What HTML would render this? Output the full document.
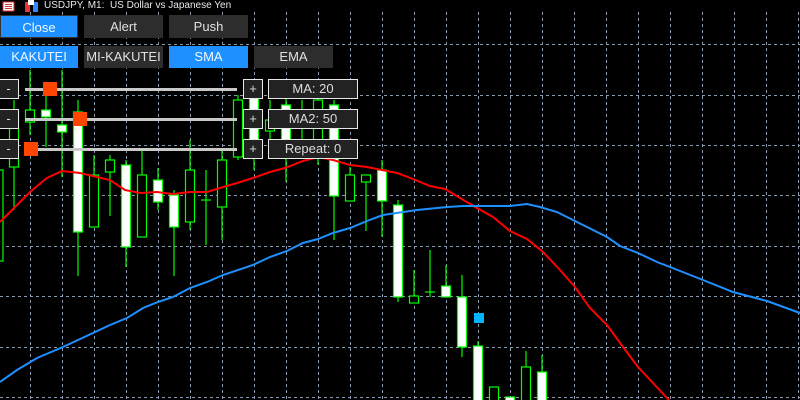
<!DOCTYPE html>
<html><head><meta charset="utf-8"><style>
body{margin:0;width:800px;height:400px;background:#000;overflow:hidden;position:relative;font-family:"Liberation Sans",sans-serif}
svg{position:absolute;left:0;top:0}
.b{position:absolute;height:23px;line-height:23px;text-align:center;color:#e0e0e0;font-size:13px;background:#2d2d2d;box-sizing:border-box}
.bl{background:#1e90ff;color:#f0f8ff}
.s{position:absolute;background:#222;border:1.5px solid #e8e8e8;box-sizing:border-box;color:#ddd;text-align:center;font-size:13px;height:20px;line-height:17px}
.hd{position:absolute;left:44px;top:0;font-size:10px;color:#e8e8e8;line-height:12px}
</style></head><body>
<svg width="800" height="400">
<g stroke="#8a9bb0" stroke-width="1" stroke-dasharray="3,3">
<line x1="0" y1="44.5" x2="800" y2="44.5"/><line x1="0" y1="95.5" x2="800" y2="95.5"/><line x1="0" y1="145.5" x2="800" y2="145.5"/><line x1="0" y1="195.5" x2="800" y2="195.5"/><line x1="0" y1="246.5" x2="800" y2="246.5"/><line x1="0" y1="296.5" x2="800" y2="296.5"/><line x1="0" y1="347.5" x2="800" y2="347.5"/><line x1="0" y1="397.5" x2="800" y2="397.5"/>
<line x1="30.5" y1="12" x2="30.5" y2="400"/><line x1="62.5" y1="12" x2="62.5" y2="400"/><line x1="94.5" y1="12" x2="94.5" y2="400"/><line x1="126.5" y1="12" x2="126.5" y2="400"/><line x1="158.5" y1="12" x2="158.5" y2="400"/><line x1="190.5" y1="12" x2="190.5" y2="400"/><line x1="222.5" y1="12" x2="222.5" y2="400"/><line x1="254.5" y1="12" x2="254.5" y2="400"/><line x1="286.5" y1="12" x2="286.5" y2="400"/><line x1="318.5" y1="12" x2="318.5" y2="400"/><line x1="350.5" y1="12" x2="350.5" y2="400"/><line x1="382.5" y1="12" x2="382.5" y2="400"/><line x1="414.5" y1="12" x2="414.5" y2="400"/><line x1="446.5" y1="12" x2="446.5" y2="400"/><line x1="478.5" y1="12" x2="478.5" y2="400"/><line x1="510.5" y1="12" x2="510.5" y2="400"/><line x1="542.5" y1="12" x2="542.5" y2="400"/><line x1="574.5" y1="12" x2="574.5" y2="400"/><line x1="606.5" y1="12" x2="606.5" y2="400"/><line x1="638.5" y1="12" x2="638.5" y2="400"/><line x1="670.5" y1="12" x2="670.5" y2="400"/><line x1="702.5" y1="12" x2="702.5" y2="400"/><line x1="734.5" y1="12" x2="734.5" y2="400"/><line x1="766.5" y1="12" x2="766.5" y2="400"/><line x1="798.5" y1="12" x2="798.5" y2="400"/>
</g>
<g stroke="#00ff00" stroke-width="1.2">
<line x1="14" y1="100" x2="14" y2="210"/><line x1="30" y1="70" x2="30" y2="135"/><line x1="46" y1="92" x2="46" y2="147"/><line x1="62" y1="70" x2="62" y2="177"/><line x1="78" y1="100" x2="78" y2="276"/><line x1="94" y1="155" x2="94" y2="227"/><line x1="110" y1="155" x2="110" y2="216"/><line x1="126" y1="160" x2="126" y2="267"/><line x1="142" y1="151" x2="142" y2="237"/><line x1="158" y1="168" x2="158" y2="210"/><line x1="174" y1="190" x2="174" y2="276"/><line x1="190" y1="140" x2="190" y2="230"/><line x1="206" y1="170" x2="206" y2="245"/><line x1="222" y1="151" x2="222" y2="240"/><line x1="238" y1="95" x2="238" y2="160"/><line x1="254" y1="90" x2="254" y2="170"/><line x1="270" y1="100" x2="270" y2="140"/><line x1="286" y1="95" x2="286" y2="182"/><line x1="302" y1="100" x2="302" y2="140"/><line x1="318" y1="95" x2="318" y2="165"/><line x1="334" y1="100" x2="334" y2="240"/><line x1="350" y1="167" x2="350" y2="201"/><line x1="366" y1="175" x2="366" y2="231"/><line x1="382" y1="160" x2="382" y2="237"/><line x1="398" y1="200" x2="398" y2="302"/><line x1="414" y1="270" x2="414" y2="303"/><line x1="430" y1="250" x2="430" y2="297"/><line x1="446" y1="265" x2="446" y2="297"/><line x1="462" y1="275" x2="462" y2="357"/><line x1="478" y1="341" x2="478" y2="400"/><line x1="526" y1="351" x2="526" y2="400"/><line x1="542" y1="355" x2="542" y2="400"/>
<line x1="425" y1="292" x2="435" y2="292"/><line x1="201" y1="200" x2="211" y2="200"/>
</g>
<g stroke="#00ff00" stroke-width="1.2">
<rect x="-2" y="170" width="5" height="91" fill="#000"/>
<rect x="9.5" y="110" width="9" height="57" fill="#000"/>
<rect x="25.5" y="110" width="9" height="12" fill="#000"/>
<rect x="41.5" y="110" width="9" height="7" fill="#fff"/>
<rect x="57.5" y="125" width="9" height="7" fill="#fff"/>
<rect x="73.5" y="112" width="9" height="120" fill="#fff"/>
<rect x="89.5" y="175" width="9" height="52" fill="#000"/>
<rect x="105.5" y="160" width="9" height="12" fill="#000"/>
<rect x="121.5" y="165" width="9" height="82" fill="#fff"/>
<rect x="137.5" y="175" width="9" height="62" fill="#000"/>
<rect x="153.5" y="180" width="9" height="22" fill="#fff"/>
<rect x="169.5" y="195" width="9" height="32" fill="#fff"/>
<rect x="185.5" y="170" width="9" height="52" fill="#000"/>
<rect x="217.5" y="160" width="9" height="47" fill="#000"/>
<rect x="233.5" y="100" width="9" height="57" fill="#000"/>
<rect x="249.5" y="95" width="9" height="60" fill="#fff"/>
<rect x="265.5" y="120" width="9" height="11" fill="#000"/>
<rect x="281.5" y="105" width="9" height="53" fill="#fff"/>
<rect x="313.5" y="100" width="9" height="40" fill="#000"/>
<rect x="329.5" y="105" width="9" height="91" fill="#fff"/>
<rect x="345.5" y="175" width="9" height="26" fill="#000"/>
<rect x="361.5" y="175" width="9" height="7" fill="#000"/>
<rect x="377.5" y="170" width="9" height="31" fill="#fff"/>
<rect x="393.5" y="205" width="9" height="92" fill="#fff"/>
<rect x="409.5" y="296" width="9" height="7" fill="#000"/>
<rect x="441.5" y="286" width="9" height="11" fill="#fff"/>
<rect x="457.5" y="297" width="9" height="50" fill="#fff"/>
<rect x="473.5" y="346" width="9" height="60" fill="#fff"/>
<rect x="489.5" y="387" width="9" height="20" fill="#000"/>
<rect x="505.5" y="397" width="9" height="10" fill="#fff"/>
<rect x="521.5" y="367" width="9" height="40" fill="#000"/>
<rect x="537.5" y="372" width="9" height="40" fill="#fff"/>
</g>
<rect x="474" y="313" width="10" height="10" fill="#00b4ff"/>
<polyline fill="none" stroke="#ff0000" stroke-width="2" points="0,222 13,209 30,192 47,178 62,171 80,173 97,177 110,180 125,190 140,193 157,192 173,194 190,192 207,192 220,188 237,183 253,178 270,172 285,168 303,161 318,157 333,160 350,165 367,167 397,173 413,179 430,186 445,189 460,198 477,208 493,217 510,231 527,239 543,252 560,270 575,287 590,308 607,325 623,347 638,367 653,383 667,398 669,400"/>
<polyline fill="none" stroke="#1e90ff" stroke-width="2" points="0,382 17,370 37,358 63,347 93,333 110,325 127,318 143,308 158,302 173,297 190,288 207,282 223,275 253,265 270,257 287,251 303,243 318,239 333,233 350,228 367,221 383,215 417,210 447,207 463,206 510,206 527,204 540,207 557,212 577,222 607,237 620,246 638,253 657,262 670,267 703,280 733,292 767,301 800,313"/>
<g fill="#c8c8c8"><rect x="25" y="88" width="212" height="3"/><rect x="25" y="118" width="212" height="3"/><rect x="25" y="148" width="212" height="3"/></g>
<g fill="#ff4500"><rect x="43" y="82" width="14" height="14"/><rect x="73" y="112" width="14" height="14"/><rect x="24" y="142" width="14" height="14"/></g>
<rect x="3" y="2" width="11" height="9" fill="#fff" stroke="#d33" stroke-width="1"/>
<g stroke="#d33"><line x1="5" y1="4.5" x2="12" y2="4.5"/><line x1="5" y1="6.5" x2="12" y2="6.5"/><line x1="5" y1="8.5" x2="12" y2="8.5"/></g>
<rect x="25" y="2" width="5" height="10" fill="#e33"/><rect x="33" y="2" width="5" height="10" fill="#38f"/><rect x="28" y="0" width="6" height="5" fill="#fff"/>
</svg>
<div class="hd">USDJPY, M1:&nbsp; US Dollar vs Japanese Yen</div>
<div class="b bl" style="left:0;top:15px;width:78px;border:1px solid #333">Close</div>
<div class="b" style="left:84px;top:15px;width:79px">Alert</div>
<div class="b" style="left:169px;top:15px;width:79px">Push</div>
<div class="b bl" style="left:0;top:46px;width:78px;height:22px;line-height:22px">KAKUTEI</div>
<div class="b" style="left:84px;top:46px;width:79px;height:22px;line-height:22px">MI-KAKUTEI</div>
<div class="b bl" style="left:169px;top:46px;width:79px;height:22px;line-height:22px">SMA</div>
<div class="b" style="left:254px;top:46px;width:79px;height:22px;line-height:22px">EMA</div>
<div class="s" style="left:-2px;top:79px;width:21px">-</div>
<div class="s" style="left:-2px;top:109px;width:21px">-</div>
<div class="s" style="left:-2px;top:139px;width:21px">-</div>
<div class="s" style="left:243px;top:79px;width:20px">+</div>
<div class="s" style="left:243px;top:109px;width:20px">+</div>
<div class="s" style="left:243px;top:139px;width:20px">+</div>
<div class="s" style="left:268px;top:79px;width:90px">MA: 20</div>
<div class="s" style="left:268px;top:109px;width:90px">MA2: 50</div>
<div class="s" style="left:268px;top:139px;width:90px">Repeat: 0</div>
</body></html>
